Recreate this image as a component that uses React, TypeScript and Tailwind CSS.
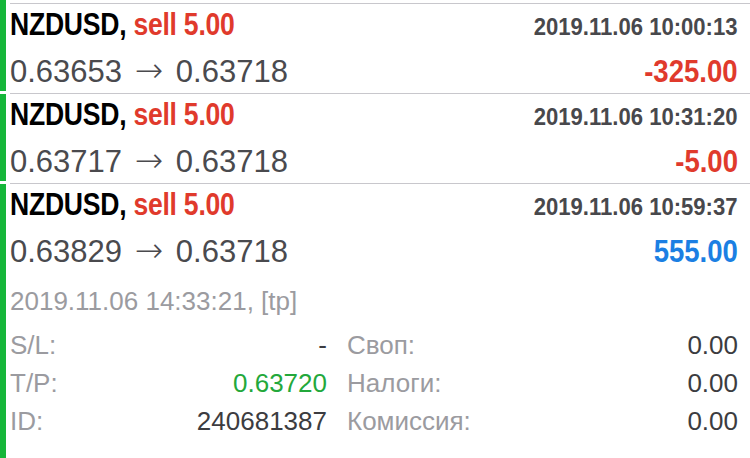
import React from 'react'

type Deal = {
  symbol: string
  side: string
  time: string
  open: string
  close: string
  profit: string
  positive: boolean
}

const deals: Deal[] = [
  { symbol: 'NZDUSD', side: 'sell 5.00', time: '2019.11.06 10:00:13', open: '0.63653', close: '0.63718', profit: '-325.00', positive: false },
  { symbol: 'NZDUSD', side: 'sell 5.00', time: '2019.11.06 10:31:20', open: '0.63717', close: '0.63718', profit: '-5.00', positive: false },
  { symbol: 'NZDUSD', side: 'sell 5.00', time: '2019.11.06 10:59:37', open: '0.63829', close: '0.63718', profit: '555.00', positive: true },
]

// no condensed face installed, so the bold narrow type is squeezed horizontally
function DealHead({ deal }: { deal: Deal }) {
  return (
    <>
      <div className="flex items-baseline justify-between pt-[5px]">
        <span className="inline-block whitespace-nowrap text-[32px] leading-[31px] font-bold origin-left scale-x-[0.83] tracking-[-0.3px]">
          <span className="text-black">{deal.symbol},</span>{' '}
          <span className="text-[#e03a2c]">{deal.side}</span>
        </span>
        <span className="inline-block whitespace-nowrap text-[24px] leading-[31px] font-bold origin-right scale-x-[0.92] text-[#48484c]">
          {deal.time}
        </span>
      </div>
      <div className="flex items-baseline justify-between mt-[13px]">
        <span className="text-[31px] leading-[31px] text-[#4a4a4e] whitespace-nowrap">
          {deal.open}{' '}
          <span style={{ fontFamily: '"DejaVu Sans", sans-serif' }} className="mx-[4px] text-[34px] font-extralight">
            →
          </span>{' '}
          {deal.close}
        </span>
        <span
          className={`inline-block text-[32px] leading-[31px] font-bold origin-right scale-x-[0.86] ${
            deal.positive ? 'text-[#1b7fe3]' : 'text-[#e03a2c]'
          }`}
        >
          {deal.profit}
        </span>
      </div>
    </>
  )
}

function Field({ label, value, valueClass }: { label: string; value: string; valueClass: string }) {
  return (
    <div className="flex justify-between">
      <span className="text-[#9b9ba0]">{label}</span>
      <span className={valueClass}>{value}</span>
    </div>
  )
}

export default function App() {
  return (
    <div
      className="w-[750px] h-[458px] overflow-hidden bg-white"
      style={{ fontFamily: '"Liberation Sans", Arial, sans-serif' }}
    >
      {deals.map((deal, i) => {
        const last = i === deals.length - 1
        return (
          <div key={i} className="flex">
            <div className={`w-[6px] bg-[#16b63a] shrink-0 ${last ? '' : 'mb-[3px]'}`} />
            <div className="flex-1 ml-[4px]">
              {i === 0 && <div className="mt-[3px] border-t border-[#c8c7cc]" />}
              <div className={`pr-[12px] ${last ? '' : 'h-[90px] border-b border-[#c8c7cc]'}`}>
                <DealHead deal={deal} />
                {last && (
                  <div className="pb-[20px]">
                    <div className="mt-[21px] text-[26px] leading-[26px] text-[#9b9ba0]">2019.11.06 14:33:21, [tp]</div>
                    <div className="mt-[12px] grid grid-cols-[317px_1fr] gap-x-[20px] text-[26px] leading-[38px]">
                      <Field label="S/L:" value="-" valueClass="text-[#3c3c40]" />
                      <Field label="Своп:" value="0.00" valueClass="text-[#3c3c40]" />
                      <Field label="T/P:" value="0.63720" valueClass="text-[#23a83b]" />
                      <Field label="Налоги:" value="0.00" valueClass="text-[#3c3c40]" />
                      <Field label="ID:" value="240681387" valueClass="text-[#3c3c40]" />
                      <Field label="Комиссия:" value="0.00" valueClass="text-[#3c3c40]" />
                    </div>
                  </div>
                )}
              </div>
            </div>
          </div>
        )
      })}
    </div>
  )
}
